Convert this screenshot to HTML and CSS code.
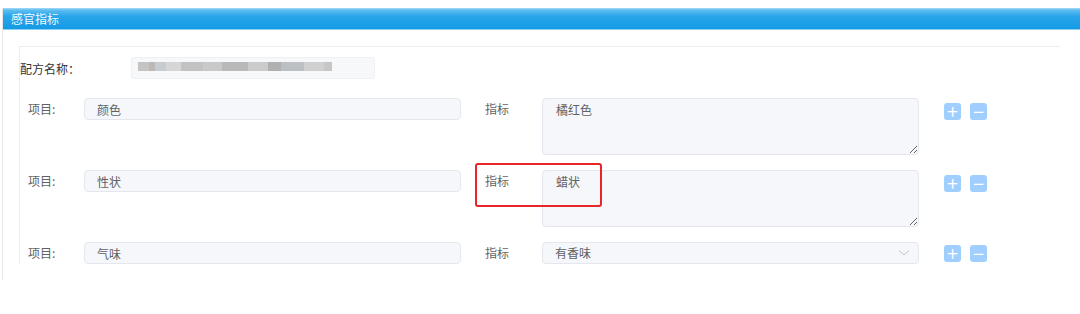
FILE: index.html
```html
<!DOCTYPE html>
<html lang="zh-CN">
<head>
    <meta charset="UTF-8">
    <title>感官指标</title>
    <link rel="stylesheet" href="styles.css">
</head>
<body>
    <div class="panel">
        <div class="panel-header">感官指标</div>
        <div class="panel-body">
            <div class="form-box">
                <div class="form-line">
                    <span class="line-label">配方名称：</span>
                    <div class="name-input"><span class="mosaic"></span></div>
                </div>

                <div class="item-row">
                    <span class="row-label">项目:</span>
                    <input class="field" type="text" value="颜色" readonly>
                    <span class="row-label label-index">指标</span>
                    <textarea class="field area" readonly>橘红色</textarea>
                    <div class="ops">
                        <button class="op-btn">+</button>
                        <button class="op-btn">−</button>
                    </div>
                </div>

                <div class="item-row">
                    <span class="row-label">项目:</span>
                    <input class="field" type="text" value="性状" readonly>
                    <span class="row-label label-index">指标</span>
                    <textarea class="field area" readonly>蜡状</textarea>
                    <div class="ops">
                        <button class="op-btn">+</button>
                        <button class="op-btn">−</button>
                    </div>
                    <div class="mark"></div>
                </div>

                <div class="item-row">
                    <span class="row-label">项目:</span>
                    <input class="field" type="text" value="气味" readonly>
                    <span class="row-label label-index">指标</span>
                    <div class="field select">
                        <span>有香味</span>
                        <svg class="chevron" width="12" height="8" viewBox="0 0 12 8">
                            <path d="M1 1.5 L6 6 L11 1.5" fill="none" stroke="#c0c4cc" stroke-width="1"/>
                        </svg>
                    </div>
                    <div class="ops">
                        <button class="op-btn">+</button>
                        <button class="op-btn">−</button>
                    </div>
                </div>
            </div>
        </div>
    </div>
</body>
</html>
```

FILE: styles.css
```css
* {
    margin: 0;
    padding: 0;
    box-sizing: border-box;
}

body {
    font-family: "Noto Sans CJK SC", "Noto Sans", sans-serif;
    font-size: 12px;
    color: #606266;
    background: #fff;
    padding-top: 8px;
}

.panel {
    margin-left: 2px;
    height: 272px;
    border-left: 1px solid #e6e6e6;
}

.panel-header {
    height: 22px;
    line-height: 21px;
    padding-left: 8px;
    color: #f2f9ff;
    font-size: 12px;
    background: linear-gradient(to bottom, #a8dcf7 0, #5fbdf0 2px, #2aa6ea 8px, #139ae4 100%);
    border-bottom: 1px solid #8ccff2;
}

.panel-body {
    padding: 16px 20px 0 16px;
}

.form-box {
    border-top: 1px solid #eeeeee;
    border-left: 1px solid #eeeeee;
    padding-top: 10px;
}

.form-line {
    display: flex;
    align-items: center;
    height: 22px;
}

.line-label {
    width: 111px;
    font-size: 12px;
    color: #333;
}

.name-input {
    width: 244px;
    height: 22px;
    border: 1px solid #eef0f4;
    border-radius: 3px;
    background: #f7f8fa;
    padding: 4px 0 0 6px;
}

.mosaic {
    display: block;
    width: 194px;
    height: 9px;
    background: linear-gradient(to right,
        #c4c4c4 0 11px, #bbb8b5 11px 17px, #c7cbd2 17px 28px, #d6d6d6 28px 43px,
        #c2c2c2 43px 65px, #c9c9c9 65px 84px, #b9b9b9 84px 110px, #cbcbcb 110px 130px,
        #b0b0b0 130px 143px, #bcc0c4 143px 166px, #d0d0d0 166px 186px, #c6c6c6 186px 194px);
}

.item-row {
    position: relative;
    display: flex;
    align-items: flex-start;
    padding-left: 8px;
    margin-top: 19px;
}

.item-row + .item-row {
    margin-top: 15px;
}

.row-label {
    width: 56px;
    line-height: 22px;
    font-size: 12px;
    color: #606266;
}

.label-index {
    width: 57px;
    margin-left: 24px;
}

.field {
    width: 377px;
    height: 22px;
    border: 1px solid #e4e7ed;
    border-radius: 4px;
    background: #f5f7fa;
    color: #606266;
    font-family: inherit;
    font-size: 12px;
    padding: 0 12px;
    outline: none;
}

.area {
    height: 57px;
    padding: 4px 13px;
    line-height: 14px;
    resize: vertical;
}

.select {
    display: flex;
    align-items: center;
    justify-content: space-between;
    padding-right: 8px;
    line-height: 20px;
}

.ops {
    display: flex;
    gap: 9px;
    margin-left: 25px;
    margin-top: 5px;
}

.item-row:last-child .ops {
    margin-top: 3px;
}

.op-btn {
    width: 17px;
    height: 17px;
    border: none;
    border-radius: 3px;
    background: #a0cfff;
    color: #fff;
    font-size: 15px;
    line-height: 16px;
    font-family: "DejaVu Sans", sans-serif;
}

.mark {
    position: absolute;
    left: 455px;
    top: -7px;
    width: 127px;
    height: 44px;
    border: 2px solid #e8262a;
    border-radius: 3px;
}
```
